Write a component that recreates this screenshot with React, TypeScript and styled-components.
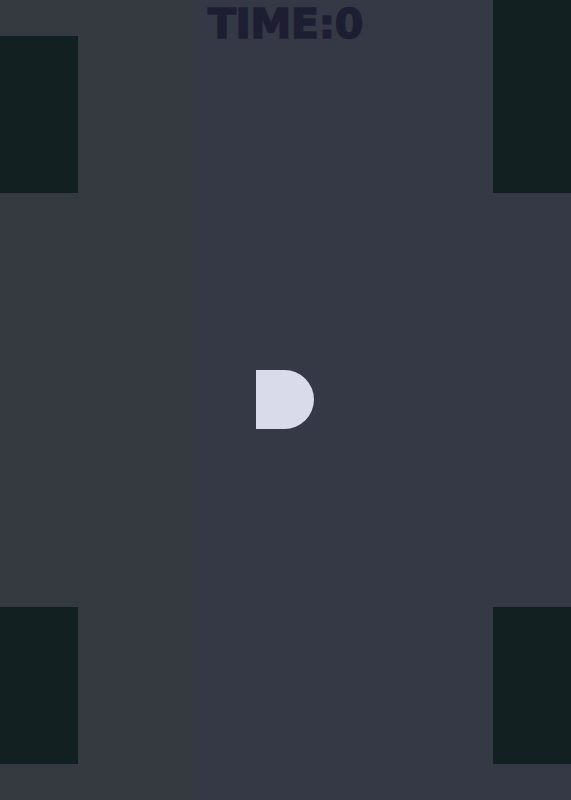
import React from "react";
import styled, { createGlobalStyle } from "styled-components";

const Global = createGlobalStyle`
  html, body { margin: 0; padding: 0; background: #353845; }
  #root { width: 571px; height: 800px; }
`;

const Stage = styled.div`
  position: relative;
  width: 571px;
  height: 800px;
  overflow: hidden;
  background: linear-gradient(90deg, #343a40 0px, #343a40 192px, #353845 198px, #353845 100%);
`;

const Timer = styled.div`
  position: absolute;
  top: 2px;
  left: 0;
  right: 0;
  text-align: center;
  font-family: "DejaVu Sans", sans-serif;
  font-weight: 700;
  font-size: 41px;
  line-height: 44px;
  color: #1e1e32;
  letter-spacing: -0.3px;
  -webkit-text-stroke: 1.6px #1e1e32;
`;

const Block = styled.div<{ $x: number; $y: number; $h: number }>`
  position: absolute;
  left: ${(p) => p.$x}px;
  top: ${(p) => p.$y}px;
  width: 78px;
  height: ${(p) => p.$h}px;
  background: #132022;
`;

const Player = styled.div`
  position: absolute;
  left: 256px;
  top: 370px;
  width: 58px;
  height: 59px;
  background: #d9dbea;
  border-radius: 0 30px 30px 0;
`;

export default function App() {
  return (
    <>
      <Global />
      <Stage>
        <Block $x={0} $y={36} $h={157} />
        <Block $x={493} $y={0} $h={193} />
        <Block $x={0} $y={607} $h={157} />
        <Block $x={493} $y={607} $h={157} />
        <Player />
        <Timer>TIME:0</Timer>
      </Stage>
    </>
  );
}
